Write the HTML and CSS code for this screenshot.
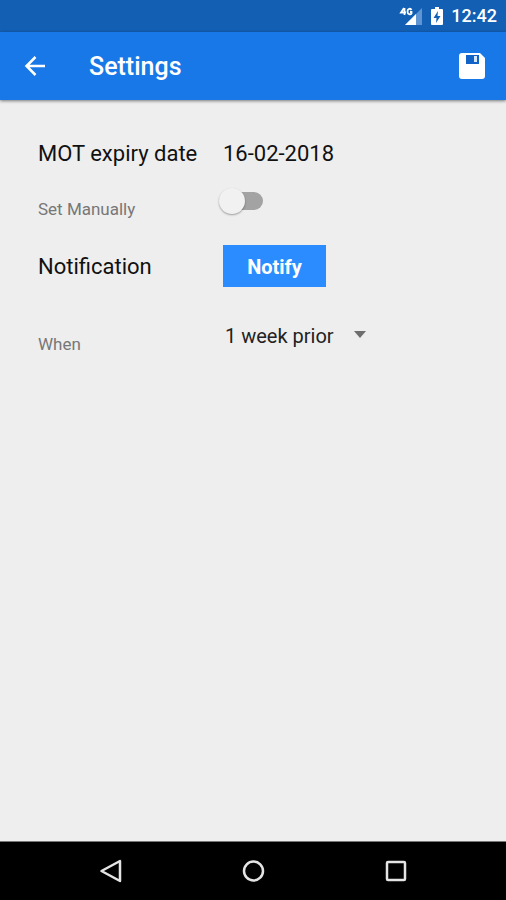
FILE: index.html
```html
<!DOCTYPE html>
<html lang="en">
<head>
<meta charset="utf-8">
<meta name="viewport" content="width=device-width, initial-scale=1">
<title>Settings</title>
<link rel="stylesheet" href="styles.css">
</head>
<body>
<div class="status-bar">
  <svg class="signal-icon" width="24" height="20" viewBox="0 0 24 20" role="img" aria-label="4G signal">
    <path d="M23 2v17H6z" fill="#5f95d3"/>
    <path d="M17 8v11H6z" fill="#fff"/>
    <path d="M5 2 2 6.500h5M5.500 2v7M12.500 4C11.500 2 8.500 2.500 8.500 5.500s3 3.500 4 2V6H11" fill="none" stroke="#fff" stroke-width="1.800"/>
  </svg>
  <svg class="battery-icon" width="12" height="20" viewBox="0 0 12 20" role="img" aria-label="Battery charging">
    <path d="M4 1h4v2h3q1 0 1 1v14q0 1-1 1H1q-1 0-1-1V4q0-1 1-1h3z" fill="#fff"/>
    <path d="M7 5 2.500 12H5.500L5 17l4.500-7H6.500z" fill="#125fb4"/>
  </svg>
  <time class="clock">12:42</time>
</div>
<header class="app-bar">
  <button class="icon-button" type="button" aria-label="Back">
    <svg width="22" height="22" viewBox="0 0 22 22"><path d="M11.500 2 2.500 11l9 9M2.500 11H21" fill="none" stroke="#fff" stroke-width="2.500"/></svg>
  </button>
  <h1 class="title">Settings</h1>
  <button class="icon-button" type="button" aria-label="Save">
    <svg width="28" height="28" viewBox="0 0 28 28">
      <path d="M4 1h18l5 5v18q0 3-3 3H4q-3 0-3-3V4q0-3 3-3z" fill="#fff"/>
      <path d="M8 3h13v9H8z" fill="#1263c8"/>
      <path d="M16 4h3v6h-3z" fill="#d5e6fb"/>
    </svg>
  </button>
</header>
<main class="settings">
  <div class="row">
    <span class="heading">MOT expiry date</span>
    <span class="heading">16-02-2018</span>
  </div>
  <div class="row row-manual">
    <label class="sub-label" for="manual">Set Manually</label>
    <input class="switch" id="manual" type="checkbox" role="switch">
  </div>
  <div class="row row-notify">
    <span class="heading">Notification</span>
    <button class="notify" type="button">Notify</button>
  </div>
  <div class="row row-when">
    <label class="sub-label" for="when">When</label>
    <div class="select-wrap">
      <select class="select" id="when"><option>1 week prior</option></select>
      <svg class="caret" width="12" height="7" viewBox="0 0 12 7" aria-hidden="true"><path d="M0 0h12L6 7z" fill="#6e6e6e"/></svg>
    </div>
  </div>
</main>
<nav class="nav-bar" aria-label="System">
  <button class="icon-button" type="button" aria-label="Back">
    <svg width="24" height="24" viewBox="0 0 24 24"><path d="M22 2v20L3.500 12z" fill="none" stroke="#e4e4e4" stroke-width="2.500" stroke-linejoin="round"/></svg>
  </button>
  <button class="icon-button" type="button" aria-label="Home">
    <svg width="24" height="24" viewBox="0 0 24 24"><circle cx="12.500" cy="12" r="9.500" fill="none" stroke="#e4e4e4" stroke-width="2.500"/></svg>
  </button>
  <button class="icon-button" type="button" aria-label="Overview">
    <svg width="24" height="24" viewBox="0 0 24 24"><rect x="3" y="3" width="18" height="18" rx="1" fill="none" stroke="#e4e4e4" stroke-width="2.500"/></svg>
  </button>
</nav>
</body>
</html>
```
FILE: styles.css
```css
* {
  box-sizing: border-box;
}

body {
  display: flex;
  flex-direction: column;
  min-height: 100vh;
  margin: 0;
  background: #eee;
  color: #111;
  font-family: Roboto, sans-serif;
}

button,
select,
input {
  margin: 0;
  font-family: inherit;
}

svg {
  display: block;
}

.status-bar {
  display: flex;
  align-items: center;
  justify-content: flex-end;
  height: 32px;
  padding: 0 9px;
  background: #125fb4;
  color: #fff;
}

.battery-icon {
  margin: 0 8px;
}

.clock {
  font-size: 18px;
  font-weight: 500;
  line-height: 24px;
}

.app-bar {
  display: flex;
  align-items: center;
  height: 68px;
  padding: 0 18px 0 19px;
  background: #1878e8;
  box-shadow: 0 1px 3px rgba(0, 0, 0, 0.5);
  color: #fff;
}

.icon-button {
  display: grid;
  place-items: center;
  min-width: 32px;
  height: 32px;
  padding: 0;
  border: 0;
  background: none;
}

.title {
  flex: 1;
  margin: 2px 0 0 38px;
  font-size: 25px;
  font-weight: 500;
  line-height: 32px;
}

.settings {
  flex: 1;
  padding: 32px 20px 32px 38px;
}

.row {
  display: grid;
  grid-template-columns: 185px 1fr;
  align-items: center;
  justify-items: start;
  min-height: 42px;
}

.row-manual {
  margin-top: 6px;
}

.row-notify {
  margin-top: 23px;
}

.row-when {
  margin-top: 28px;
}

.heading {
  padding-top: 2px;
  font-size: 22px;
  line-height: 28px;
}

.sub-label {
  padding-top: 16px;
  color: #777;
  font-size: 17px;
  line-height: 24px;
}

.switch {
  appearance: none;
  position: relative;
  width: 40px;
  height: 18px;
  border-radius: 9px;
  background: #a3a3a3;
}

.switch::before {
  content: "";
  position: absolute;
  top: -4px;
  left: -4px;
  width: 26px;
  height: 26px;
  border-radius: 50%;
  background: #f1f1f1;
  box-shadow: 0 1px 2px rgba(0, 0, 0, 0.35);
}

.switch:checked::before {
  left: 18px;
}

.notify {
  width: 103px;
  height: 42px;
  padding: 2px 0 0;
  border: 0;
  background: #2a8cff;
  color: #fff;
  font-size: 20px;
  font-weight: 700;
  line-height: 24px;
}

.select-wrap {
  position: relative;
}

.select {
  appearance: none;
  width: 148px;
  height: 36px;
  padding: 0 28px 0 2px;
  border: 0;
  background: none;
  color: #222;
  font-size: 20px;
}

.caret {
  position: absolute;
  top: 13px;
  right: 5px;
  pointer-events: none;
}

.nav-bar {
  display: flex;
  align-items: center;
  justify-content: space-between;
  height: 59px;
  padding: 0 94px;
  border-top: 1px solid #777;
  background: #000;
}
```
